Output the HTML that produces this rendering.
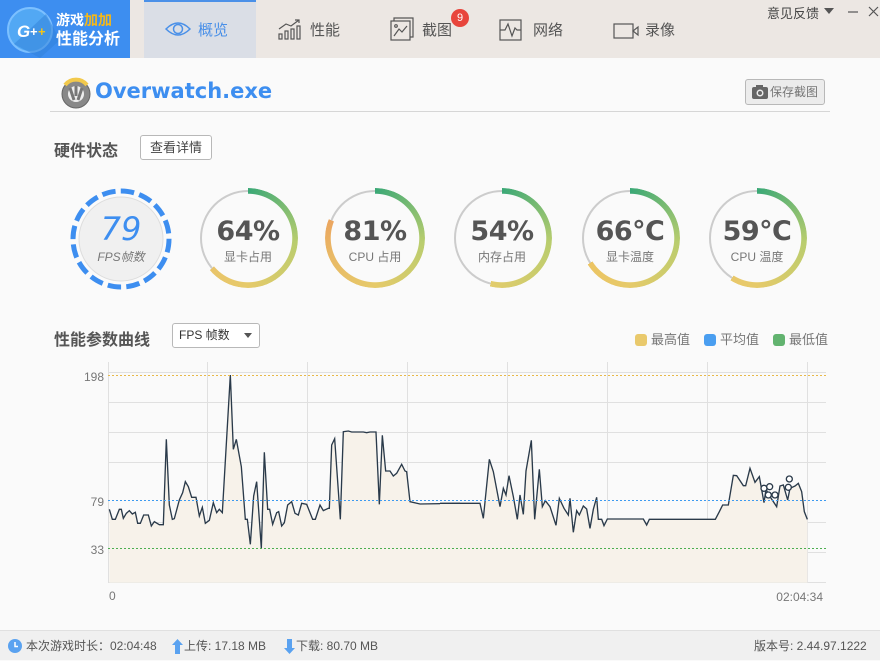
<!DOCTYPE html>
<html><head><meta charset="utf-8"><style>
*{margin:0;padding:0;box-sizing:border-box}
body{width:880px;height:660px;overflow:hidden;background:#fafafa;font-family:"Liberation Sans","Noto Sans CJK SC",sans-serif;color:#555;position:relative}
.abs{position:absolute}
.hdr{left:0;top:0;width:880px;height:58px;background:#ece7e3}
.logo{left:0;top:0;width:130px;height:58px;background:#3d8ef0}
.tab{top:0;height:58px;font-size:15px;color:#555;line-height:62px}
.g{position:absolute;width:100px;height:100px;border-radius:50%}
.track{border:2px solid #ccc;width:96px;height:96px;margin:2px}
.arc{-webkit-mask:radial-gradient(circle,transparent 44px,#000 44.5px,#000 50px,transparent 50.5px);mask:radial-gradient(circle,transparent 44px,#000 44.5px,#000 50px,transparent 50.5px)}
.gv{position:absolute;width:100px;text-align:center;font-size:27px;line-height:32px;height:32px;font-weight:bold;color:#555;top:28px;left:0;font-family:"DejaVu Sans","Noto Sans CJK SC",sans-serif;letter-spacing:-0.5px}
.gl{position:absolute;width:100px;text-align:center;font-size:12px;line-height:16px;color:#777;top:61px;left:0}
.btn{border:1px solid #b8b8b8;border-radius:3px;background:#fff;font-size:13px;color:#444;text-align:center}
.foot{left:0;top:630px;width:880px;height:30px;background:#f0f0f0;border-top:1px solid #e0e0e0;font-size:12px;color:#555;line-height:30px}
.leg{top:329px;font-size:13px;color:#777}
.leg i{display:inline-block;width:12px;height:12px;border-radius:3px;vertical-align:-2px;margin-right:4px}
</style></head><body>
<div class="abs hdr"></div>
<div class="abs logo">
<svg width="130" height="58" class="abs" style="left:0;top:0">
<circle cx="30" cy="30" r="22" fill="#52a8f4" stroke="#7cc0ff" stroke-width="2"/>
<path d="M14 44 L46 14 L60 40 L40 58 Z" fill="#2f7fd8" opacity=".5"/>
<text x="17" y="37" font-size="17" font-weight="bold" font-style="italic" fill="#fff" font-family="Liberation Sans">G</text>
<text x="30" y="36" font-size="13" font-weight="bold" fill="#fff" font-family="Liberation Sans">+</text>
<text x="38" y="36" font-size="13" font-weight="bold" fill="#f5c518" font-family="Liberation Sans">+</text>
<text x="56" y="25" font-size="14" font-weight="bold" fill="#fff">游戏<tspan fill="#f5b818">加加</tspan></text>
<text x="56" y="44" font-size="16" font-weight="bold" fill="#fff">性能分析</text>
</svg></div>
<div class="abs" style="left:144px;top:0;width:112px;height:58px;background:#dadee6;border-top:2px solid #4a90e8"></div>
<svg class="abs" style="left:165px;top:20px" width="26" height="18"><path d="M1 9 Q13 -3 25 9 Q13 21 1 9Z" fill="none" stroke="#4a90e8" stroke-width="1.5"/><circle cx="13" cy="9" r="4.5" fill="none" stroke="#4a90e8" stroke-width="1.5"/></svg>
<div class="abs tab" style="left:198px;color:#4a90e8">概览</div>
<svg class="abs" style="left:278px;top:18px" width="24" height="22"><g fill="none" stroke="#555" stroke-width="1.2"><rect x="1" y="16" width="3" height="5"/><rect x="7" y="13" width="3" height="8"/><rect x="13" y="11" width="3" height="10"/><rect x="19" y="8" width="3" height="13"/><path d="M1 11 L8 6 L13 8 L21 2"/><path d="M17 2 L21 2 L21 5"/></g></svg>
<div class="abs tab" style="left:310px">性能</div>
<svg class="abs" style="left:390px;top:17px" width="24" height="24"><g fill="none" stroke="#555" stroke-width="1.2"><rect x="1" y="4" width="19" height="19"/><path d="M4 4 V1 H23 V20 H20"/><path d="M4 19 L9 12 L12 15 L17 9"/><circle cx="6" cy="9" r="1.3"/></g></svg>
<div class="abs tab" style="left:422px">截图</div>
<div class="abs" style="left:451px;top:9px;width:18px;height:18px;border-radius:50%;background:#e8453c;color:#fff;font-size:11px;text-align:center;line-height:18px">9</div>
<svg class="abs" style="left:499px;top:19px" width="24" height="22"><g fill="none" stroke="#555" stroke-width="1.2"><rect x="1" y="1" width="21" height="20"/><path d="M1 11 H6 L9 5 L13 17 L16 9 L18 11 H22"/></g></svg>
<div class="abs tab" style="left:533px">网络</div>
<svg class="abs" style="left:613px;top:23px" width="27" height="16"><g fill="none" stroke="#555" stroke-width="1.2"><rect x="1" y="1" width="19" height="14"/><path d="M20 8 L25 4 V12 Z"/></g></svg>
<div class="abs tab" style="left:645px">录像</div>
<div class="abs" style="left:767px;top:3px;font-size:13px;color:#444">意见反馈</div>
<svg class="abs" style="left:823px;top:5px" width="57" height="14"><path d="M1 3 H11 L6 9Z" fill="#555"/><path d="M25 7 H35" stroke="#555" stroke-width="1.2"/><path d="M46 2 L55 11 M55 2 L46 11" stroke="#555" stroke-width="1.2"/></svg>

<svg class="abs" style="left:59px;top:76px" width="34" height="34"><circle cx="17" cy="18" r="14" fill="#888" stroke="#666" stroke-width="1"/><path d="M6 9 A14 14 0 0 1 28 9" stroke="#f2c94c" stroke-width="4" fill="none"/><circle cx="17" cy="18" r="8" fill="#eee"/><path d="M11 12 L15 24 M23 12 L19 24 M17 10 V20" stroke="#777" stroke-width="3"/></svg>
<div class="abs" style="left:95px;top:79px;font-size:21px;font-weight:bold;color:#3d8ef0;font-family:'DejaVu Sans',sans-serif">Overwatch.exe</div>
<div class="abs" style="left:50px;top:111px;width:780px;height:1px;background:#d6d6d6"></div>
<div class="abs btn" style="left:745px;top:79px;width:80px;height:26px;background:#ececec;line-height:24px;font-size:12px;color:#777;padding-left:18px">保存截图</div>
<svg class="abs" style="left:752px;top:85px" width="16" height="14"><rect x="0" y="2" width="16" height="12" rx="2" fill="#666"/><rect x="4" y="0" width="7" height="3" fill="#666"/><circle cx="8" cy="8" r="3.5" fill="#ececec"/><circle cx="8" cy="8" r="2" fill="#666"/></svg>

<div class="abs" style="left:54px;top:137px;font-size:16px;font-weight:bold;color:#555">硬件状态</div>
<div class="abs btn" style="left:140px;top:135px;width:72px;height:25px;line-height:23px">查看详情</div>

<svg class="abs" style="left:70px;top:188px" width="102" height="102"><circle cx="51" cy="51" r="48" fill="none" stroke="#3d8ef0" stroke-width="5" stroke-dasharray="13.5 5.3"/><circle cx="51" cy="51" r="42" fill="#f0f0f0" stroke="#ddd" stroke-width="1"/></svg>
<div class="abs" style="left:71px;top:210px;width:100px;text-align:center;font-size:32px;font-style:italic;color:#3d8ef0;font-family:'DejaVu Sans',sans-serif;font-weight:300">79</div>
<div class="abs" style="left:71px;top:248px;width:100px;text-align:center;font-size:12px;color:#777;font-style:italic">FPS帧数</div>

<div class="abs" style="left:198px;top:188px;width:100px;height:100px">
<div class="g track"></div><div class="g arc" style="background:conic-gradient(#3aa876 0deg,#b9cd6e 95deg,#e6ca6a 180deg,#e9c46a 230deg,transparent 230deg)"></div>
<div class="gv">64%</div><div class="gl">显卡占用</div></div>
<div class="abs" style="left:325px;top:188px;width:100px;height:100px">
<div class="g track"></div><div class="g arc" style="background:conic-gradient(#3aa876 0deg,#b9cd6e 95deg,#e6ca6a 180deg,#e9b865 250deg,#eba55f 292deg,transparent 292deg)"></div>
<div class="gv">81%</div><div class="gl">CPU 占用</div></div>
<div class="abs" style="left:452px;top:188px;width:100px;height:100px">
<div class="g track"></div><div class="g arc" style="background:conic-gradient(#3aa876 0deg,#b9cd6e 95deg,#e3cc6c 194deg,transparent 194deg)"></div>
<div class="gv">54%</div><div class="gl">内存占用</div></div>
<div class="abs" style="left:580px;top:188px;width:100px;height:100px">
<div class="g track"></div><div class="g arc" style="background:conic-gradient(#3aa876 0deg,#b9cd6e 95deg,#e6ca6a 180deg,#ecc463 238deg,transparent 238deg)"></div>
<div class="gv">66℃</div><div class="gl">显卡温度</div></div>
<div class="abs" style="left:707px;top:188px;width:100px;height:100px">
<div class="g track"></div><div class="g arc" style="background:conic-gradient(#3aa876 0deg,#b9cd6e 95deg,#e6ca6a 180deg,#e9c86a 212deg,transparent 212deg)"></div>
<div class="gv">59℃</div><div class="gl">CPU 温度</div></div>

<div class="abs" style="left:54px;top:326px;font-size:16px;font-weight:bold;color:#555">性能参数曲线</div>
<div class="abs btn" style="left:172px;top:323px;width:88px;height:25px;line-height:23px;text-align:left;padding-left:6px;font-size:12px;color:#333">FPS 帧数</div>
<svg class="abs" style="left:244px;top:333px" width="9" height="6"><path d="M0 0 H8 L4 5Z" fill="#555"/></svg>
<div class="abs leg" style="left:635px"><i style="background:#e9c96c"></i>最高值</div>
<div class="abs leg" style="left:704px"><i style="background:#4a9ef0"></i>平均值</div>
<div class="abs leg" style="left:773px"><i style="background:#62b36f"></i>最低值</div>

<svg class="abs" style="left:0;top:0" width="880" height="660">
<g stroke="#e0e0e0" stroke-width="1">
<path d="M108 372.5H826M108 402.5H826M108 432.5H826M108 462.5H826M108 522.5H826M108 552.5H826"/>
<path d="M207.5 362V582M307.5 362V582M407.5 362V582M507.5 362V582M607.5 362V582M707.5 362V582M807.5 362V582M108.5 362V582"/>
<path d="M108 582.5H826"/>
</g>
<g transform="translate(60,360) scale(0.33333)">
<polygon fill="#f7f2ea" points="148,668 148,448 157,478 166,478 178,448 184,448 190,475 199,460 208,452 217,462 226,457 233,490 241,490 251,465 265,465 274,498 283,485 298,494 310,494 319,238 328,435 337,478 343,476 358,420 368,398 376,365 385,380 395,412 408,412 418,468 427,442 436,490 448,481 460,428 470,458 478,448 487,458 511,45 520,268 529,238 544,320 556,478 562,478 571,553 581,408 590,365 604,565 613,277 623,448 629,448 638,493 650,458 656,455 665,498 673,488 683,435 695,425 705,460 715,465 725,430 740,433 758,478 766,478 780,435 790,452 805,445 808,445 815,255 824,236 841,478 850,215 865,213 875,216 910,216 920,218 930,216 948,216 958,433 967,226 977,333 990,333 1000,348 1010,340 1025,313 1035,333 1040,335 1050,425 1080,432 1200,430 1200,668"/>
<polyline fill="none" stroke="#2a3a4a" stroke-width="4" points="148,448 157,478 166,478 178,448 184,448 190,475 199,460 208,452 217,462 226,457 233,490 241,490 251,465 265,465 274,498 283,485 298,494 310,494 319,238 328,435 337,478 343,476 358,420 368,398 376,365 385,380 395,412 408,412 418,468 427,442 436,490 448,481 460,428 470,458 478,448 487,458 511,45 520,268 529,238 544,320 556,478 562,478 571,553 581,408 590,365 604,565 613,277 623,448 629,448 638,493 650,458 656,455 665,498 673,488 683,435 695,425 705,460 715,465 725,430 740,433 758,478 766,478 780,435 790,452 805,445 808,445 815,255 824,236 841,478 850,215 865,213 875,216 910,216 920,218 930,216 948,216 958,433 967,226 977,333 990,333 1000,348 1010,340 1025,313 1035,333 1040,335 1050,425 1080,432 1200,430"/>
</g>
<g transform="translate(440,360) scale(0.33333)">
<polygon fill="#f7f2ea" points="0,668 0,430 120,430 130,475 148,298 160,335 180,440 190,385 198,405 207,347 220,410 232,478 240,405 250,463 258,333 274,241 284,478 298,328 307,440 316,422 330,440 348,496 358,415 372,445 385,465 390,415 400,517 410,452 418,465 430,438 440,447 450,505 460,448 470,412 475,478 485,478 492,497 502,477 610,477 620,495 628,478 826,478 838,455 848,435 865,435 880,346 890,347 910,377 917,377 930,325 945,367 958,350 972,428 978,388 990,410 1010,440 1020,378 1030,375 1043,420 1050,385 1065,378 1075,370 1085,395 1093,455 1102,478 1102,668"/>
<polyline fill="none" stroke="#2a3a4a" stroke-width="4" points="0,430 120,430 130,475 148,298 160,335 180,440 190,385 198,405 207,347 220,410 232,478 240,405 250,463 258,333 274,241 284,478 298,328 307,440 316,422 330,440 348,496 358,415 372,445 385,465 390,415 400,517 410,452 418,465 430,438 440,447 450,505 460,448 470,412 475,478 485,478 492,497 502,477 610,477 620,495 628,478 826,478 838,455 848,435 865,435 880,346 890,347 910,377 917,377 930,325 945,367 958,350 972,428 978,388 990,410 1010,440 1020,378 1030,375 1043,420 1050,385 1065,378 1075,370 1085,395 1093,455 1102,478"/>
<g fill="#fff" stroke="#2a3a4a" stroke-width="4"><circle cx="972" cy="385" r="9"/><circle cx="989" cy="380" r="9"/><circle cx="985" cy="405" r="9"/><circle cx="1005" cy="405" r="9"/><circle cx="1048" cy="357" r="9"/><circle cx="1045" cy="382" r="9"/></g>
</g>
<g stroke-width="1" stroke-dasharray="2 2">
<path d="M108 375.5H826" stroke="#e8b94a"/>
<path d="M108 500.5H826" stroke="#3d9af0"/>
<path d="M108 548.5H826" stroke="#4caf50"/>
</g>
<g font-size="12" fill="#777" font-family="Liberation Sans">
<text x="104" y="381" text-anchor="end">198</text>
<text x="104" y="506" text-anchor="end">79</text>
<text x="104" y="554" text-anchor="end">33</text>
<text x="109" y="600">0</text>
<text x="823" y="601" text-anchor="end">02:04:34</text>
</g>
</svg>

<div class="abs foot">
<svg class="abs" style="left:8px;top:8px" width="14" height="14"><circle cx="7" cy="7" r="7" fill="#5aa2f0"/><path d="M7 3 V7.5 H10" stroke="#fff" stroke-width="1.5" fill="none"/></svg>
<span class="abs" style="left:26px;top:0">本次游戏时长：02:04:48</span>
<svg class="abs" style="left:172px;top:8px" width="11" height="15"><path d="M5.5 0 L11 6 H8 V15 H3 V6 H0Z" fill="#5aa2f0"/></svg>
<span class="abs" style="left:184px;top:0">上传: 17.18 MB</span>
<svg class="abs" style="left:284px;top:8px" width="11" height="15"><path d="M5.5 15 L11 9 H8 V0 H3 V9 H0Z" fill="#5aa2f0"/></svg>
<span class="abs" style="left:296px;top:0">下载: 80.70 MB</span>
<span class="abs" style="left:754px;top:0">版本号: 2.44.97.1222</span>
</div>
</body></html>
